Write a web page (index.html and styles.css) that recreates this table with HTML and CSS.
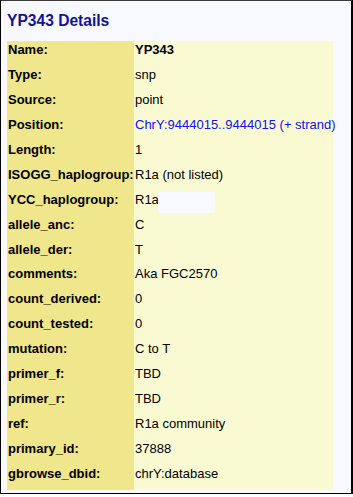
FILE: index.html
```html
<!DOCTYPE html>
<html>
<head>
<meta charset="utf-8">
<link rel="stylesheet" href="styles.css">
</head>
<body>
<div class="panel">
  <h2 class="title">YP343 Details</h2>
  <div class="details">
    <div class="label">Name:</div><div class="value strong">YP343</div>
    <div class="label">Type:</div><div class="value">snp</div>
    <div class="label">Source:</div><div class="value">point</div>
    <div class="label">Position:</div><div class="value"><span class="link">ChrY:9444015..9444015 (+ strand)</span></div>
    <div class="label">Length:</div><div class="value">1</div>
    <div class="label">ISOGG_haplogroup:</div><div class="value">R1a (not listed)</div>
    <div class="label">YCC_haplogroup:</div><div class="value redacted-cell">R1a-<span class="redact"></span></div>
    <div class="label">allele_anc:</div><div class="value">C</div>
    <div class="label">allele_der:</div><div class="value">T</div>
    <div class="label">comments:</div><div class="value">Aka FGC2570</div>
    <div class="label">count_derived:</div><div class="value">0</div>
    <div class="label">count_tested:</div><div class="value">0</div>
    <div class="label">mutation:</div><div class="value">C to T</div>
    <div class="label">primer_f:</div><div class="value">TBD</div>
    <div class="label">primer_r:</div><div class="value">TBD</div>
    <div class="label">ref:</div><div class="value">R1a community</div>
    <div class="label">primary_id:</div><div class="value">37888</div>
    <div class="label">gbrowse_dbid:</div><div class="value">chrY:database</div>
  </div>
</div>
</body>
</html>
```
FILE: styles.css
```css
html, body {
  margin: 0;
  padding: 0;
  background: #ffffff;
}
body {
  font-family: "Liberation Sans", Arial, sans-serif;
  width: 353px;
  height: 497px;
  overflow: hidden;
}
.panel {
  width: 344px;
  background: #f7f9ff;
  border-top: 1px solid #3a3a3a;
  border-left: 1px solid #000;
  border-right: 2px solid #000;
  border-bottom: 1px solid #000;
  padding: 11px 0 3px 6px;
}
.title {
  margin: 0 0 11px 0;
  font-size: 15.6px;
  line-height: 18px;
  font-weight: bold;
  color: #14148c;
}
.details {
  display: grid;
  grid-template-columns: 127px 199px;
  grid-auto-rows: 24.94px;
  font-size: 13px;
  line-height: 15px;
  color: #000;
}
.label {
  background: #f0e68c;
  font-weight: bold;
  padding: 1px 0 0 1px;
  white-space: nowrap;
}
.value {
  background: #fafad2;
  padding: 1px 0 0 1px;
  white-space: nowrap;
}
.value.strong {
  font-weight: bold;
}
.link {
  color: #1010f0;
}
.redacted-cell {
  position: relative;
}
.redact {
  position: absolute;
  left: 24px;
  top: 1px;
  width: 57px;
  height: 21px;
  background: #f8faff;
  border-radius: 2px;
}
```
